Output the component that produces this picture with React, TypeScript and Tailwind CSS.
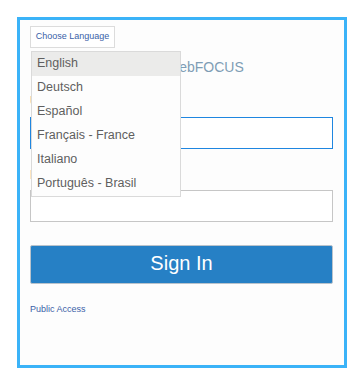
import React from "react";

const langs = ["English", "Deutsch", "Español", "Français - France", "Italiano", "Português - Brasil"];

export default function App() {
  return (
    <div className="w-[363px] h-[388px] bg-white pt-[17px] pl-[17px]" style={{ fontFamily: '"Liberation Sans", Arial, sans-serif' }}>
      <div className="relative w-[330px] h-[351px] border-[3px] border-[#3bb3f8] bg-[#fdfdfd] pt-[6px] pl-[10px] pr-[11px] flex flex-col">
        <button className="self-start h-[22px] w-[85px] border border-[#dcdcdc] bg-white text-[9px] text-[#3a5fa8] flex items-center justify-center">
          Choose Language
        </button>
        <div className="mt-[10px] h-[18px] leading-[18px] text-[14px] text-[#7f9db5] text-center pr-[16px]">
          Sign In to WebFOCUS
        </div>
        <div className="mt-[17px] h-[16px] leading-[16px] text-[12px] text-[#a04458]">User Name</div>
        <input className="mt-[8px] h-[32px] w-full border border-[#1f86e0] bg-white outline-none" />
        <div className="mt-[18px] h-[16px] leading-[16px] text-[12px] text-[#a04458]">Password</div>
        <input type="password" className="mt-[7px] h-[32px] w-full border border-[#c6c6c6] bg-white outline-none" />
        <button className="mt-[23px] h-[39px] w-full rounded-[2px] border border-[#b9c3cc] bg-[#2680c5] text-white text-[20px] flex items-center justify-center pb-[3px]">
          Sign In
        </button>
        <a className="mt-[19px] h-[12px] leading-[12px] text-[9px] text-[#3a5fa8]">Public Access</a>

        <div className="absolute left-[11px] top-[31px] w-[150px] border border-[#dadada] bg-[#fdfdfd] flex flex-col">
          {langs.map((l, i) => (
            <div
              key={l}
              className={`h-[24px] flex items-center pl-[5px] pb-[1px] text-[12.5px] text-[#5f5f5f] ${i === 0 ? "bg-[#ebebea]" : ""}`}
            >
              {l}
            </div>
          ))}
        </div>
      </div>
    </div>
  );
}
